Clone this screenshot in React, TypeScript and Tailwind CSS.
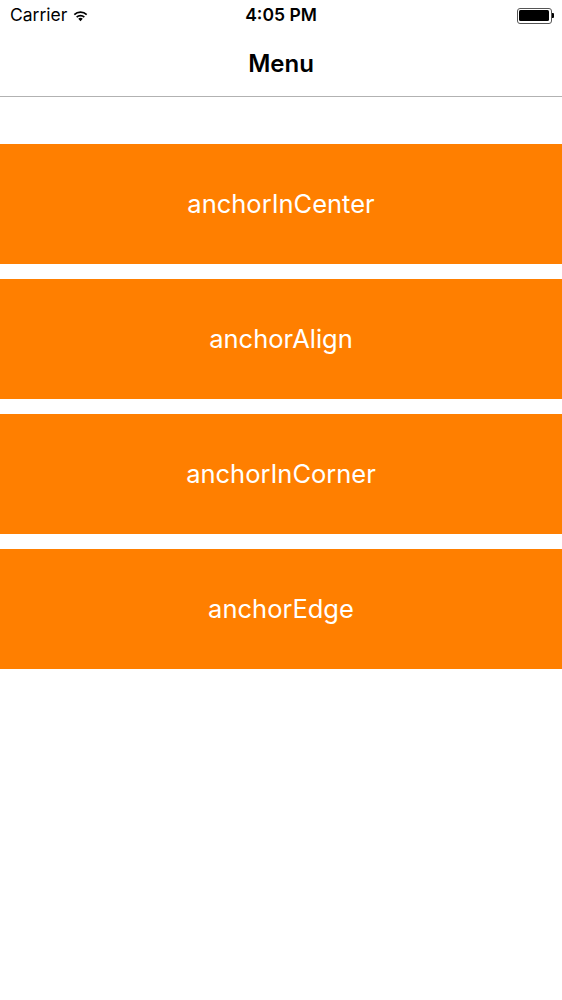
const items = ["anchorInCenter", "anchorAlign", "anchorInCorner", "anchorEdge"];

function Wifi() {
  return (
    <svg width="15" height="12" viewBox="0 0 16 12" className="ml-[6px]">
      <path d="M8 11.5 L5.6 9 A3.4 3.4 0 0 1 10.4 9 Z" fill="#000" />
      <path d="M3.9 7.3 A5.9 5.9 0 0 1 12.1 7.3" stroke="#000" strokeWidth="1.8" fill="none" />
      <path d="M1.4 4.6 A9.4 9.4 0 0 1 14.6 4.6" stroke="#000" strokeWidth="1.8" fill="none" />
    </svg>
  );
}

function Battery() {
  return (
    <div className="flex items-center">
      <div className="w-[35px] h-[16px] rounded-[3px] border border-[#555] p-[1.5px] flex">
        <div className="flex-1 bg-black rounded-[1.5px]" />
      </div>
      <div className="w-[2.5px] h-[5px] bg-black rounded-r-[1px]" />
    </div>
  );
}

export default function App() {
  return (
    <div className="w-[562px] h-[1000px] bg-white flex flex-col" style={{ fontFamily: "Inter, 'Liberation Sans', sans-serif" }}>
      <div className="h-[31px] relative flex items-center pl-[10px] pr-[8px]">
        <div className="flex items-center text-[17.5px] text-black">
          <span>Carrier</span>
          <Wifi />
        </div>
        <div className="absolute left-0 right-0 top-0 h-[31px] flex items-center justify-center text-[17.5px] font-semibold text-black pointer-events-none">
          4:05 PM
        </div>
        <div className="ml-auto">
          <Battery />
        </div>
      </div>
      <div className="h-[66px] flex items-center justify-center border-b border-[#b2b2b2] text-[24px] font-semibold text-black">
        Menu
      </div>
      <div className="pt-[47px] flex flex-col gap-[15px]">
        {items.map((name) => (
          <button key={name} className="h-[120px] w-full bg-[#ff7f00] text-white text-[25.5px] flex items-center justify-center">
            {name}
          </button>
        ))}
      </div>
    </div>
  );
}
